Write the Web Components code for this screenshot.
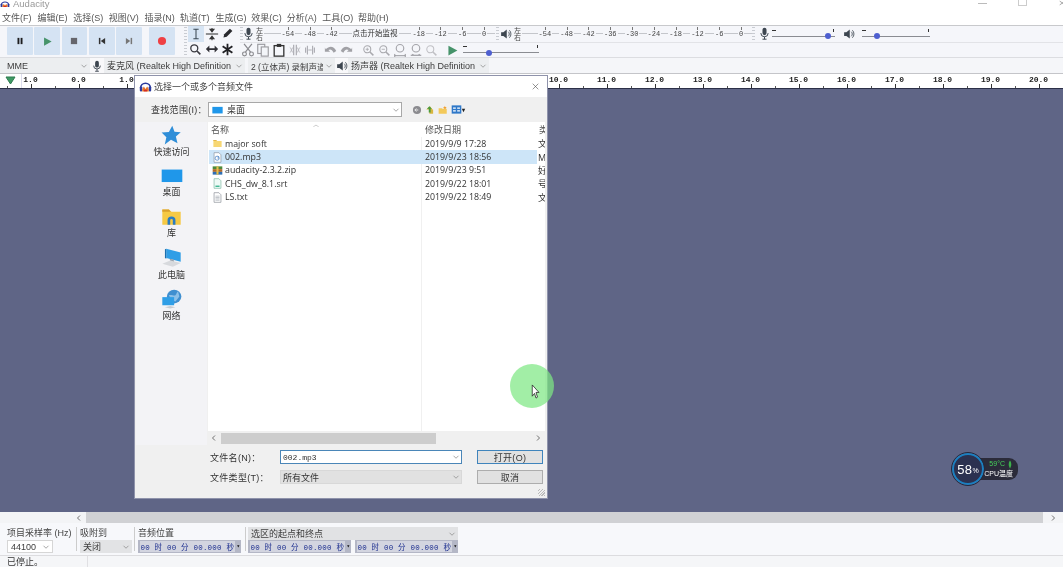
<!DOCTYPE html>
<html>
<head>
<meta charset="utf-8">
<title>Audacity</title>
<style>
  html, body { margin: 0; padding: 0; background: #5f6586; }
</style>
</head>
<body>
<au-app>
  <title-bar></title-bar>
  <menu-bar></menu-bar>
  <tool-dock></tool-dock>
  <device-bar></device-bar>
  <time-ruler></time-ruler>
  <track-canvas></track-canvas>
  <h-scroll></h-scroll>
  <selection-bar></selection-bar>
  <status-bar></status-bar>
  <open-dialog></open-dialog>
  <cursor-spot></cursor-spot>
  <temp-widget></temp-widget>
</au-app>

<script>
//all icons live here, on a 16 box unless they say otherwise
const ICONS = {
    logo: '<path d="M2 10a6 6 0 0 1 12 0" fill="none" stroke="#2b3a9e" stroke-width="2"/><rect x="1" y="8" width="3" height="6" rx="1" fill="#2b3a9e"/><rect x="12" y="8" width="3" height="6" rx="1" fill="#2b3a9e"/><path d="M4 11l2-3 2 3 2-3 2 3v3H4z" fill="#e8762c"/><path d="M6 12h4v2H6z" fill="#d42a2a"/>',
    pause: '<rect x="4" y="3" width="3" height="10" fill="#1d1d1f"/><rect x="9" y="3" width="3" height="10" fill="#1d1d1f"/>',
    play: '<path d="M3 2l11 6-11 6z" fill="#46936a"/>',
    stop: '<rect x="3" y="3" width="10" height="10" fill="#66666c"/>',
    prev: '<rect x="3" y="3" width="2.4" height="10" fill="#333"/><path d="M13 3v10L6 8z" fill="#333"/>',
    next: '<rect x="10.6" y="3" width="2.4" height="10" fill="#777"/><path d="M3 3v10l7-5z" fill="#777"/>',
    record: '<circle cx="8" cy="8" r="6.500" fill="#ef4044"/>',
    ibeam: '<path d="M5 2.500h6M5 13.500h6M8 2.500v11" fill="none" stroke="#3d4a55" stroke-width="1.200"/>',
    envelope: '<path d="M1 8h14" stroke="#333" stroke-width="1.200"/><path d="M8 1v4M8 15v-4" stroke="#333" stroke-width="1.200"/><path d="M4.500 2h7L8 6.500zM4.500 14h7L8 9.500z" fill="#333"/>',
    pencil: '<path d="M3 13l1-4 7-7 3 3-7 7z" fill="#2a2a2e"/>',
    zoom: '<circle cx="6.500" cy="6.500" r="4.300" fill="none" stroke="#3a3a40" stroke-width="1.600"/><path d="M9.800 9.800L14 14" stroke="#3a3a40" stroke-width="2"/>',
    shift: '<path d="M1 8l4-4v3h6V4l4 4-4 4V9H5v3z" fill="#303036"/>',
    multi: '<path d="M8 1v14M2 4l12 8M14 4L2 12" stroke="#202024" stroke-width="2.200"/>',
    mic: '<rect x="5.500" y="1" width="5" height="9" rx="2.500" fill="#3d4650"/><path d="M3.500 7.500a4.500 4.500 0 0 0 9 0M8 12v3M5.500 15h5" fill="none" stroke="#3d4650" stroke-width="1.200"/>',
    speaker: '<path d="M1.500 5.500h3L9 2v12l-4.500-3.500h-3z" fill="#3d4650"/><path d="M11 5a4 4 0 0 1 0 6M12.500 3a7 7 0 0 1 0 10" fill="none" stroke="#3d4650" stroke-width="1.100"/>',
    cut: '<circle cx="4" cy="12.500" r="2.200" fill="none" stroke="#8b8b90" stroke-width="1.300"/><circle cx="12" cy="12.500" r="2.200" fill="none" stroke="#8b8b90" stroke-width="1.300"/><path d="M5 10.500L12.500 1M11 10.500L3.500 1" stroke="#8b8b90" stroke-width="1.400"/>',
    copy: '<rect x="2" y="1.500" width="8" height="10.500" fill="#f3f5f9" stroke="#9a9a9f" stroke-width="1.300"/><rect x="6" y="4.500" width="8" height="10.500" fill="#f3f5f9" stroke="#9a9a9f" stroke-width="1.300"/>',
    paste: '<rect x="2.500" y="3" width="11" height="12" fill="none" stroke="#333" stroke-width="1.500"/><rect x="5.500" y="1" width="5" height="3.500" fill="#333"/>',
    trim: '<path d="M6.500 2v12M9.500 2v12" stroke="#a8a8ae" stroke-width="1.300"/><path d="M2 5c2 0 2 6 4 6M14 5c-2 0-2 6-4 6M2 11c2 0 2-6 4-6M14 11c-2 0-2-6-4-6" fill="none" stroke="#b6b6bb"/>',
    silence: '<path d="M3 5v6M5 3v10M11 3v10M13 5v6" stroke="#a8a8ae" stroke-width="1.200"/><path d="M6 8h4" stroke="#a8a8ae"/>',
    undo: '<path d="M2 7c4-4 9-4 12 2l-3 2c-2-4-4-4-6-3l2 2H1V5z" fill="#a1a1a6"/>',
    redo: '<path d="M14 7C10 3 5 3 2 9l3 2c2-4 4-4 6-3L9 10h6V5z" fill="#a1a1a6"/>',
    zin: '<circle cx="6.500" cy="6.500" r="4.300" fill="none" stroke="#a9a9ae" stroke-width="1.300"/><path d="M9.800 9.800L14 14" stroke="#a9a9ae" stroke-width="1.800"/><path d="M4.500 6.500h4M6.500 4.500v4" stroke="#a9a9ae"/>',
    zout: '<circle cx="6.500" cy="6.500" r="4.300" fill="none" stroke="#a9a9ae" stroke-width="1.300"/><path d="M9.800 9.800L14 14" stroke="#a9a9ae" stroke-width="1.800"/><path d="M4.500 6.500h4" stroke="#a9a9ae"/>',
    zsel: '<circle cx="8" cy="6" r="4.300" fill="none" stroke="#a4a4aa" stroke-width="1.300"/><path d="M2 14.500h12M2 12.500v4M14 12.500v4" stroke="#8a8a90"/>',
    zfit: '<circle cx="8" cy="6" r="4.300" fill="none" stroke="#a4a4aa" stroke-width="1.300"/><path d="M2 14h3l-1-1.500M14 14h-3l1-1.500M5 14h6" stroke="#7f7f86" fill="none"/>',
    ztog: '<circle cx="6.500" cy="6.500" r="4.300" fill="none" stroke="#c0c0c5" stroke-width="1.300"/><path d="M9.800 9.800L14 14" stroke="#c0c0c5" stroke-width="1.800"/>',
    chev: '<path d="M4 6l4 4 4-4" fill="none" stroke="#8a8a8a" stroke-width="1.200"/>',
    left: '<path d="M10 3L5 8l5 5" fill="none" stroke="#444" stroke-width="1.500"/>',
    right: '<path d="M6 3l5 5-5 5" fill="none" stroke="#444" stroke-width="1.500"/>',
    close: '<path d="M3 3l10 10M13 3L3 13" stroke="#444" stroke-width="1"/>',
    desktop: '<rect x="0.500" y="3" width="15" height="10.500" fill="#1f97ea"/>',
    star: '<path d="M9 .5l1.800 4.800 5 .4-3.900 3.400 1.300 5.400L8 11.800 3 15.500l1.300-5.800L.5 5.900l5.800-.4z" fill="#2f8ed8"/>',
    library: '<path d="M1 2h5l2 2h7v11H1z" fill="#f6c944"/><path d="M1 2h5l1.500 2H1z" fill="#d9a02e"/><path d="M5 15v-4a3 3 0 0 1 6 0v4h-2v-4a1 1 0 0 0-2 0v4z" fill="#2a7cc2"/>',
    pc: '<path d="M4 .5l11 3v7.500L4 8z" fill="#2f9ee6"/><path d="M4 .5L3 1v7l1 .5z" fill="#1c6fae"/><path d="M1 12.500l6-2.500 8 2-6 3z" fill="#d7d9dd"/><path d="M7 10l-.5-1.500 3 .7.500 1.500z" fill="#9aa3ad"/>',
    net: '<circle cx="10" cy="6" r="5.500" fill="#3f8fd0"/><path d="M6 5c2-1 4 1 5 0s1-3 2-3l1 4-3 4-3-1z" fill="#8cc0e8"/><rect x="1" y="6.500" width="9" height="6.500" fill="#2f9ee6"/><path d="M3 14.500l4-1 4 1-4 1z" fill="#c6ccd2"/>',
    folder: '<path d="M2 3h4l1.500 1.500H14V13H2z" fill="#f7d774"/><path d="M2 3h4l1 1.500H2z" fill="#e3b64b"/>',
    audio: '<path d="M3 1h7l3 3v11H3z" fill="#fff" stroke="#8a94a2"/><circle cx="7.500" cy="9" r="3" fill="none" stroke="#3a78c0"/><path d="M9 6v4" stroke="#3a78c0"/>',
    zip: '<rect x="1" y="2" width="14" height="4" fill="#4e8a3a"/><rect x="1" y="6" width="14" height="4" fill="#b16a2b"/><rect x="1" y="10" width="14" height="4" fill="#2f6fb5"/><rect x="6.500" y="2" width="3" height="12" fill="#e5c04a"/>',
    srt: '<path d="M3 1h7l3 3v11H3z" fill="#eefaf6" stroke="#7fb9a4"/><path d="M5 11h6v2H5z" fill="#39b58e"/>',
    txt: '<path d="M3 1h7l3 3v11H3z" fill="#fff" stroke="#8a8f98"/><path d="M5 6h6M5 8h6M5 10h6M5 12h6" stroke="#a8adb5"/>',
    back: '<circle cx="8" cy="8" r="6.500" fill="#8b8b8f"/><path d="M10 8H5M7 5.500L4.500 8 7 10.500" fill="none" stroke="#eee" stroke-width="1.500"/>',
    up: '<path d="M2 7h5v7h6V7l-1 0L8 2z" fill="#d8b63f"/><path d="M7 2l4 4H9v6H6V6H3z" fill="#4b9a3e"/>',
    newdir: '<path d="M1 5h5l1 1h7v8H1z" fill="#f3c95a"/><path d="M11 1l.8 2 2.200.2-1.700 1.400.5 2.100L11 5.600 9.200 6.700l.5-2.100L8 3.200l2.200-.2z" fill="#f0a032"/>',
    view: '<rect x="1" y="2" width="14" height="12" fill="#2f78c8"/><path d="M3 5h4v2H3zM9 5h4v2H9zM3 9h4v2H3zM9 9h4v2H9z" fill="#fff"/>',
    arrow: '<path d="M3 1v12l3-3 2 5 2-1-2-5h4z" fill="#fff" stroke="#222" stroke-width=".9"/>',
    leaf: '<path d="M8 1c4 3 5 9 0 14C3 10 4 4 8 1z" fill="#3cb04a"/>'
};

const tpl = html => {
    const t = document.createElement('template');
    t.innerHTML = html;
    return t;
};

class Shadowed extends HTMLElement {
    constructor(template) {
        super();
        this.attachShadow({ mode: 'open' });
        if (template) this.shadowRoot.appendChild(template.content.cloneNode(true));
    }
}

class AuIcon extends Shadowed {
    connectedCallback() {
        const s = this.getAttribute('size') || 14;
        const w = this.getAttribute('w') || s;
        const h = this.getAttribute('h') || s;
        this.shadowRoot.innerHTML = `<style>:host{display:inline-flex;flex:none}svg{display:block}</style>
            <svg width="${w}" height="${h}" viewBox="0 0 16 16" preserveAspectRatio="none">${ICONS[this.getAttribute('name')]}</svg>`;
    }
}

//the reference is a soft video frame, the small blur brings the picture near it
const appTpl = tpl(`<style>
    :host{display:flex;flex-direction:column;position:relative;width:1063px;height:567px;overflow:hidden;filter:blur(.35px);
      background:#fff;color:#333;font:9px "Liberation Sans","Noto Sans CJK SC",sans-serif}
</style><slot></slot>`);
class AuApp extends Shadowed { constructor() { super(appTpl); } }

const titleTpl = tpl(`<style>
    :host{display:flex;height:12px;flex:none;overflow:hidden;background:#fff;color:#9a9a9a;font-size:9.500px;line-height:7px}
    span{margin-left:3px}
    .ctl{margin-left:auto;display:flex;gap:31px;margin-right:-4px;color:#aaa}
    .ctl i{display:block;width:9px;height:6px;box-sizing:border-box}
    .min{border-top:1px solid #bbb;margin-top:3px}
    .max{border:1px solid #ccc;border-top:0}
</style>
<au-icon name="logo" w="10" h="8"></au-icon><span>Audacity</span>
<div class="ctl"><i class="min"></i><i class="max"></i><au-icon name="close" w="9" h="6"></au-icon></div>`);
class TitleBar extends Shadowed { constructor() { super(titleTpl); } }

const menuTpl = tpl(`<style>
    :host{display:flex;height:13px;flex:none;background:#fff;color:#555;font-size:9px;line-height:13px;padding-left:2px}
    span{width:35.600px;white-space:nowrap;flex:none}
</style>
<span>文件(F)</span><span>编辑(E)</span><span>选择(S)</span><span>视图(V)</span><span>插录(N)</span><span>轨道(T)</span><span>生成(G)</span><span>效果(C)</span><span>分析(A)</span><span>工具(O)</span><span>帮助(H)</span>`);
class MenuBar extends Shadowed { constructor() { super(menuTpl); } }

const gripCss = `background:repeating-linear-gradient(#c9ccd2 0 1px,transparent 1px 3px);`;

const dockTpl = tpl(`<style>
    :host{display:flex;height:32px;flex:none;background:#f5f6fa;border-top:1px solid #c8c9cc;box-sizing:border-box}
    .grip{width:3px;margin:1px 0;${gripCss}flex:none}
    .transport{display:flex;gap:1.500px;padding:1px 0 0 7px;width:184px;box-sizing:border-box;flex:none}
    .gap{width:4.500px;flex:none}
    .tools{display:grid;grid-template-columns:repeat(3,15.700px);grid-template-rows:repeat(2,15.500px);padding-left:1px;width:53px;flex:none;box-sizing:border-box}
    .tools div{display:flex;align-items:center;justify-content:center}
    .tools .on{background:#d6e4f3}
    .stack{display:flex;flex-direction:column;flex:1;min-width:0}
    .row{display:flex;align-items:center;height:15.500px;flex:none}
    .row + .row{border-top:1px solid #e2e3e7}
    .cell{width:15.600px;display:flex;justify-content:center;flex:none}
    .lr{font-size:7px;line-height:7px;width:9px;color:#444;flex:none;text-align:center}
    .mic{width:13px;display:flex;justify-content:center;flex:none}
</style>
<div class="transport">
  <transport-btn icon="pause"></transport-btn><transport-btn icon="play"></transport-btn><transport-btn icon="stop"></transport-btn>
  <transport-btn icon="prev"></transport-btn><transport-btn icon="next"></transport-btn>
  <div class="gap"></div><transport-btn icon="record"></transport-btn>
</div>
<div class="grip"></div>
<div class="tools">
  <div class="on"><au-icon name="ibeam"></au-icon></div><div><au-icon name="envelope"></au-icon></div><div><au-icon name="pencil" size="13"></au-icon></div>
  <div><au-icon name="zoom" size="13"></au-icon></div><div><au-icon name="shift"></au-icon></div><div><au-icon name="multi" size="13"></au-icon></div>
</div>
<div class="stack">
  <div class="row">
    <div class="grip" style="height:14px"></div>
    <div class="mic" style="margin-left:-1px"><au-icon name="mic" size="13"></au-icon></div>
    <div class="lr">左<br>右</div>
    <level-meter pad="13" msg></level-meter>
    <div class="grip" style="height:14px;margin-left:1px"></div>
    <div class="mic" style="margin-left:1px"><au-icon name="speaker" size="12"></au-icon></div>
    <div class="lr">左<br>右</div>
    <level-meter pad="12"></level-meter>
    <div class="grip" style="height:14px"></div>
    <div class="mic" style="margin-left:2px;width:15px"><au-icon name="mic" size="13"></au-icon></div>
    <mini-slider len="63" at="56"></mini-slider>
    <div class="mic" style="margin-left:6px;width:16px"><au-icon name="speaker" size="12"></au-icon></div>
    <mini-slider len="68" at="15" style="margin-left:5px"></mini-slider>
  </div>
  <div class="row">
    <div class="cell"><au-icon name="cut"></au-icon></div><div class="cell"><au-icon name="copy"></au-icon></div><div class="cell"><au-icon name="paste"></au-icon></div><div class="cell"><au-icon name="trim"></au-icon></div><div class="cell"><au-icon name="silence"></au-icon></div>
    <div class="cell" style="margin-left:5px"><au-icon name="undo"></au-icon></div><div class="cell"><au-icon name="redo"></au-icon></div>
    <div class="cell" style="margin-left:7px"><au-icon name="zin" size="13"></au-icon></div><div class="cell"><au-icon name="zout" size="13"></au-icon></div><div class="cell"><au-icon name="zsel"></au-icon></div><div class="cell"><au-icon name="zfit"></au-icon></div><div class="cell"><au-icon name="ztog" size="13"></au-icon></div>
    <div class="cell" style="margin-left:6px"><au-icon name="play" size="13"></au-icon></div>
    <mini-slider len="76" at="26" style="margin-left:2px"></mini-slider>
  </div>
</div>`);
class ToolDock extends Shadowed { constructor() { super(dockTpl); } }

const btnTpl = tpl(`<style>
    :host{display:flex;align-items:center;justify-content:center;width:25.800px;height:28px;background:#d5e3f3;border-radius:1px;flex:none}
</style><slot></slot>`);
class TransportBtn extends Shadowed {
    constructor() { super(btnTpl); }
    connectedCallback() {
        const icon = document.createElement('au-icon');
        icon.setAttribute('name', this.getAttribute('icon'));
        icon.setAttribute('size', this.getAttribute('icon') === 'play' ? 11 : 10);
        this.appendChild(icon);
    }
}

const meterTpl = tpl(`<style>
    :host{display:block;flex:none;position:relative;height:14px;overflow:hidden;color:#444;font:7px "Liberation Mono","Noto Sans CJK SC",monospace}
    .g{display:grid;grid-template-columns:repeat(10,21.800px);height:14px;align-items:center;background:linear-gradient(#c4c6cb,#c4c6cb) 0 50%/100% 1px no-repeat}
    span{justify-self:center;background:#f5f6fa;padding:0 1px;line-height:8px;white-space:nowrap;position:relative}
    span::before{content:"";position:absolute;left:50%;top:-3px;width:1px;height:3px;background:#777}
    .m{grid-column:span 3;font:7.500px/10px "Liberation Sans","Noto Sans CJK SC",sans-serif;color:#333}
    .m::before{display:none}
</style><div class="g"></div>`);
class LevelMeter extends Shadowed {
    constructor() { super(meterTpl); }
    connectedCallback() {
        const g = this.shadowRoot.querySelector('.g');
        g.style.paddingLeft = this.getAttribute('pad') + 'px';
        const msg = this.hasAttribute('msg');
        const labels = msg
            ? ['-54', '-48', '-42', '点击开始监视', '-18', '-12', '-6', '0']
            : ['-54', '-48', '-42', '-36', '-30', '-24', '-18', '-12', '-6', '0'];
        for (const l of labels) {
            const s = document.createElement('span');
            s.textContent = l;
            if (l.length > 3) s.className = 'm';
            g.appendChild(s);
        }
    }
}

const sliderTpl = tpl(`<style>
    :host{display:block;position:relative;height:12px;flex:none;background:linear-gradient(#8a8c92,#8a8c92) 0 8px/100% 1px no-repeat}
    i{position:absolute;top:5.500px;width:6px;height:6px;border-radius:50%;background:#4e5fd0;margin-left:-3px}
    b{position:absolute;top:1px;height:3px;width:1px;background:#333}
    .a{left:0;width:4px;height:1px;top:2px}.b{right:1px}
</style><i></i><b class="a"></b><b class="b"></b>`);
class MiniSlider extends Shadowed {
    constructor() { super(sliderTpl); }
    connectedCallback() {
        this.style.width = this.getAttribute('len') + 'px';
        this.shadowRoot.querySelector('i').style.left = this.getAttribute('at') + 'px';
    }
}

const comboTpl = tpl(`<style>
    :host{display:flex;align-items:center;box-sizing:border-box;height:100%;padding-left:3px;flex:none;overflow:hidden;white-space:nowrap;background:#eceef0;color:#3c3c3c}
    span{flex:1;overflow:hidden}
    au-icon{margin:0 1px}
</style><span><slot></slot></span><au-icon name="chev" size="10"></au-icon>`);
class AuCombo extends Shadowed { constructor() { super(comboTpl); } }

const deviceTpl = tpl(`<style>
    :host{display:flex;height:16px;flex:none;background:#f5f6f9;border-top:1px solid #dcdde1;box-sizing:border-box;font-size:9px}
    .ic{width:14px;display:flex;justify-content:center;align-items:center;background:#f8f8fa;flex:none}
    au-combo + au-combo{margin-left:3px}
</style>
<au-combo style="width:90px;padding-left:7px">MME</au-combo>
<div class="ic"><au-icon name="mic" size="12"></au-icon></div>
<au-combo style="width:141px">麦克风 (Realtek High Definition</au-combo>
<au-combo style="width:87px;font-size:8.500px">2 (立体声) 录制声道</au-combo>
<div class="ic" style="width:13px"><au-icon name="speaker" size="12"></au-icon></div>
<au-combo style="width:141px">扬声器 (Realtek High Definition</au-combo>`);
class DeviceBar extends Shadowed { constructor() { super(deviceTpl); } }

const rulerTpl = tpl(`<style>
    :host{display:flex;height:15px;flex:none;background:#fff;border-top:1px solid #c4c5c9;box-sizing:border-box;overflow:hidden}
    .play{width:21.500px;flex:none;display:flex;justify-content:center;padding-top:2px;box-sizing:border-box;border-right:1px solid #dde}
    .play svg{display:block}
    .t{display:flex;margin-left:-15px}
    .c{width:48px;flex:none;position:relative;text-align:center;color:#222;font:bold 8px/10px "Liberation Mono",monospace;padding-top:1px;box-sizing:border-box;height:14px}
    .c::before{content:"";position:absolute;left:50%;bottom:0;width:1px;height:4px;background:#333}
    .c::after{content:"";position:absolute;left:0;bottom:0;width:1px;height:2px;background:#555}
</style>
<div class="play"><svg width="11" height="9" viewBox="0 0 11 9"><path d="M1 1h9L5.500 8z" fill="#3f9a64" stroke="#2d7a4e"/></svg></div>
<div class="t"></div>`);
class TimeRuler extends Shadowed {
    constructor() { super(rulerTpl); }
    connectedCallback() {
        const t = this.shadowRoot.querySelector('.t');
        for (let i = -1; i <= 20; i++) {
            const c = document.createElement('div');
            c.className = 'c';
            c.textContent = Math.abs(i).toFixed(1);
            t.appendChild(c);
        }
    }
}

const canvasTpl = tpl(`<style>
    :host{display:block;flex:1;min-height:0;background:#5f6586;border-top:1.500px solid #2c3048}
</style>`);
class TrackCanvas extends Shadowed { constructor() { super(canvasTpl); } }

const hscrollTpl = tpl(`<style>
    :host{display:flex;align-items:center;height:11px;flex:none;background:#f3f4f6}
    .l{width:86px;display:flex;justify-content:flex-end;padding-right:3px;box-sizing:border-box;flex:none}
    .th{flex:1;align-self:stretch;background:#d0d1d4}
    .r{width:20px;display:flex;justify-content:center;flex:none}
</style>
<div class="l"><au-icon name="left" size="8"></au-icon></div><div class="th"></div><div class="r"><au-icon name="right" size="8"></au-icon></div>`);
class HScroll extends Shadowed { constructor() { super(hscrollTpl); } }

const selTpl = tpl(`<style>
    :host{display:grid;height:32px;flex:none;box-sizing:border-box;padding:4px 0 0 7px;font-size:9px;color:#444;
      background:linear-gradient(#ccc,#ccc) 76px 4px/1px 24px no-repeat,linear-gradient(#ccc,#ccc) 134px 4px/1px 24px no-repeat,linear-gradient(#ccc,#ccc) 245px 4px/1px 24px no-repeat,#f7f8fb;
      grid-template-columns:73px 58px 110px 212px;grid-template-rows:13px 13px;align-content:start}
    .lb{line-height:13px;white-space:nowrap}
    .v{display:flex}
    au-combo{font-size:9px}
    .w{background:#fff;border:1px solid #d6d6d6;width:46px}
    .g{background:#e2e3e5;width:52px}
    time-box + time-box{margin-left:4px}
</style>
<div class="lb">项目采样率 (Hz)</div><div class="lb">吸附到</div><div class="lb">音频位置</div>
<div class="v"><au-combo style="width:210px;background:#e1e2e4">选区的起点和终点</au-combo></div>
<div class="v"><au-combo class="w">44100</au-combo></div>
<div class="v"><au-combo class="g">关闭</au-combo></div>
<div class="v"><time-box></time-box></div>
<div class="v"><time-box></time-box><time-box></time-box></div>`);
class SelectionBar extends Shadowed { constructor() { super(selTpl); } }

const timeTpl = tpl(`<style>
    :host{display:flex;align-items:center;justify-content:space-between;width:103px;height:13px;flex:none;box-sizing:border-box;padding:0 1px 0 2px;
      background:#b4b7c6;color:#1d2f8f;font:7.500px "Liberation Mono","Noto Sans CJK SC",monospace;white-space:nowrap;overflow:hidden}
    span{background:#d3d5e0;padding:0 .5px;letter-spacing:.2px}
    b{font-size:6px;color:#111;line-height:1}
</style><span>00 时 00 分 00.000 秒</span><b>▾</b>`);
class TimeBox extends Shadowed { constructor() { super(timeTpl); } }

const statusTpl = tpl(`<style>
    :host{display:flex;height:12px;flex:none;background:#f5f6f8;border-top:1px solid #dcdcdf;box-sizing:border-box;color:#333;font-size:9px;line-height:13px;overflow:hidden}
    div{width:88px;padding-left:7px;box-sizing:border-box;border-right:1px solid #e0e0e3}
</style><div>已停止。</div>`);
class StatusBar extends Shadowed { constructor() { super(statusTpl); } }

const dialogTpl = tpl(`<style>
    :host{position:absolute;left:134px;top:75px;width:414px;height:424px;box-sizing:border-box;display:flex;flex-direction:column;
      background:#f0f0f0;border:1px solid #8f93ab;color:#333;font-size:9px}
    .ttl{display:flex;align-items:center;height:21px;flex:none;background:#fff;padding-left:4px;gap:2px;color:#444}
    .ttl au-icon:last-child{margin-left:auto;margin-right:7px}
    .loc{display:flex;align-items:center;height:25px;flex:none;padding-left:16px}
    .loc label{width:57px;letter-spacing:.3px;white-space:nowrap}
    .path{display:flex;align-items:center;gap:4px;width:194px;height:15px;box-sizing:border-box;background:#fff;border:1px solid #a8a8a8;padding-left:3px}
    .path span{flex:1}
    .nav{display:flex;gap:3px;margin-left:10px;align-items:center}
    .nav b{font-size:6px;margin-left:-3px;color:#222}
    .main{display:flex;flex:1;min-height:0}
    .side{width:71px;flex:none;margin-left:1px;background:#f3f3f6;display:flex;flex-direction:column;align-items:center;padding-top:1px;box-sizing:border-box}
    .it{height:41px;display:flex;flex-direction:column;align-items:center;justify-content:flex-start;gap:2px;padding-top:1px;box-sizing:border-box;line-height:11px}
    .it au-icon{margin-top:1px}
    .list{flex:1;margin:0 2px 0 1px;background:#fff;display:flex;flex-direction:column;min-width:0;position:relative}
    .head{display:flex;height:15px;flex:none;align-items:center;padding-left:3px;color:#555;position:relative;white-space:nowrap;overflow:hidden}
    .head .sort{position:absolute;left:105px;top:0;width:6px;height:3px;color:#999;font-size:6px;line-height:4px}
    .n{width:214px;flex:none}
    .rows{flex:1;min-height:0;background:linear-gradient(#f0f0f0,#f0f0f0) 213px 0/1px 100% no-repeat}
    .bar{display:flex;height:14px;flex:none;align-items:center;background:#f0f0f0}
    .bar .th{width:215px;align-self:stretch;margin:2px 0 1px;background:#cdcdcd}
    .bar au-icon:first-child{margin:0 3px 0 2px}
    .bar au-icon:last-child{margin-left:auto;margin-right:3px}
    .foot{display:grid;grid-template-columns:72px 182px 81px;grid-template-rows:14px 14px;row-gap:6px;padding:5px 0 0 73px;height:53px;box-sizing:border-box;flex:none;position:relative;align-items:center;align-content:start}
    .foot label{letter-spacing:.3px;white-space:nowrap;padding-left:2px}
    .inp{display:flex;align-items:center;height:14px;box-sizing:border-box;background:#fff;border:1px solid #4a86b8;padding-left:2px;font:8px "Liberation Mono",monospace;color:#333}
    .inp span{flex:1}
    .sel{background:#e1e1e1;border:1px solid #d8d8d8;padding-left:0}
    .btn{margin-left:15px;display:flex;align-items:center;justify-content:center;height:14.500px;box-sizing:border-box;background:#e1e1e1;border:1px solid #adadad;letter-spacing:.3px}
    .btn.d{border:1px solid #3f84bc}
    .rz{position:absolute;right:2px;bottom:2px;width:7px;height:7px;background:repeating-linear-gradient(135deg,transparent 0 1px,#bbb 1px 2px)}
</style>
<div class="ttl"><au-icon name="logo" size="13"></au-icon><span>选择一个或多个音频文件</span><au-icon name="close" size="9"></au-icon></div>
<div class="loc"><label>查找范围(I)：</label>
  <div class="path"><au-icon name="desktop" w="11" h="10"></au-icon><span>桌面</span><au-icon name="chev" size="10"></au-icon></div>
  <div class="nav"><au-icon name="back" size="10"></au-icon><au-icon name="up" size="10"></au-icon><au-icon name="newdir" size="10"></au-icon><au-icon name="view" size="11"></au-icon><b>▾</b></div>
</div>
<div class="main">
  <div class="side">
    <div class="it"><au-icon name="star" size="20"></au-icon><span>快速访问</span></div>
    <div class="it"><au-icon name="desktop" w="22" h="19"></au-icon><span>桌面</span></div>
    <div class="it"><au-icon name="library" w="21" h="19"></au-icon><span>库</span></div>
    <div class="it"><au-icon name="pc" w="21" h="20"></au-icon><span>此电脑</span></div>
    <div class="it"><au-icon name="net" w="21" h="20"></au-icon><span>网络</span></div>
  </div>
  <div class="list">
    <div class="head"><span class="sort">︿</span><span class="n">名称</span><span>修改日期</span><span style="margin-left:78px">类</span></div>
    <div class="rows">
      <file-row icon="folder" name="major soft" date="2019/9/9 17:28" kind="文"></file-row>
      <file-row icon="audio" name="002.mp3" date="2019/9/23 18:56" kind="M" selected></file-row>
      <file-row icon="zip" name="audacity-2.3.2.zip" date="2019/9/23 9:51" kind="好"></file-row>
      <file-row icon="srt" name="CHS_dw_8.1.srt" date="2019/9/22 18:01" kind="号"></file-row>
      <file-row icon="txt" name="LS.txt" date="2019/9/22 18:49" kind="文"></file-row>
    </div>
    <div class="bar"><au-icon name="left" size="8"></au-icon><div class="th"></div><au-icon name="right" size="8"></au-icon></div>
  </div>
</div>
<div class="foot">
  <label>文件名(N)：</label><div class="inp"><span>002.mp3</span><au-icon name="chev" size="10"></au-icon></div><div class="btn d">打开(O)</div>
  <label>文件类型(T)：</label><div class="inp sel" style="font:9px 'Liberation Sans','Noto Sans CJK SC',sans-serif"><span style="padding-left:2px">所有文件</span><au-icon name="chev" size="10"></au-icon></div><div class="btn">取消</div>
  <div class="rz"></div>
</div>`);
class OpenDialog extends Shadowed { constructor() { super(dialogTpl); } }

const rowTpl = tpl(`<style>
    :host{display:flex;align-items:center;height:13.400px;font:8.800px "Open Sans","Noto Sans CJK SC",sans-serif;color:#333;white-space:nowrap;padding-left:4px;overflow:hidden}
    :host([selected]){background:linear-gradient(#cde5f8,#cde5f8) 1px 0/328px 100% no-repeat}
    au-icon{margin-right:2px}
    .n{width:200px;flex:none}
    .d{width:113px;flex:none}
    .k{font-size:9px}
</style><span class="n"></span><span class="d"></span><span class="k"></span>`);
class FileRow extends Shadowed {
    constructor() { super(rowTpl); }
    connectedCallback() {
        const r = this.shadowRoot;
        //icon built here: its name has to be there before it connects
        const icon = document.createElement('au-icon');
        icon.setAttribute('name', this.getAttribute('icon'));
        icon.setAttribute('size', 11);
        r.insertBefore(icon, r.querySelector('.n'));
        r.querySelector('.n').textContent = this.getAttribute('name');
        r.querySelector('.d').textContent = this.getAttribute('date');
        r.querySelector('.k').textContent = this.getAttribute('kind');
    }
}

const spotTpl = tpl(`<style>
    :host{position:absolute;left:510px;top:364px;width:44px;height:44px;border-radius:50%;background:rgba(126,232,132,.72)}
    au-icon{position:absolute;left:20px;top:20px}
</style><au-icon name="arrow" w="12" h="15"></au-icon>`);
class CursorSpot extends Shadowed { constructor() { super(spotTpl); } }

const tempTpl = tpl(`<style>
    :host{position:absolute;left:952px;top:453px;width:66px;height:32px;color:#fff}
    .pill{position:absolute;left:16px;top:5px;width:50px;height:22px;border-radius:9px;background:#2b2b3a;display:flex;flex-direction:column;align-items:flex-end;padding:1px 5px 0 0;box-sizing:border-box;font-size:7px;line-height:10px}
    .hot{color:#46d05a;display:flex;align-items:center;gap:2px}
    .ring{position:absolute;left:0;top:0;width:32px;height:32px;box-sizing:border-box;border-radius:50%;background:#2b3150;border:2px solid #1c7fc0;outline:1px solid #24293f;display:flex;align-items:center;justify-content:center;font:13px "Liberation Sans",sans-serif;letter-spacing:.5px}
    .ring small{font-size:7px;margin-top:3px;letter-spacing:0}
</style>
<div class="pill"><div class="hot">59°C<au-icon name="leaf" w="6" h="9"></au-icon></div><div>CPU温度</div></div>
<div class="ring">58<small>%</small></div>`);
class TempWidget extends Shadowed { constructor() { super(tempTpl); } }

customElements.define('au-icon', AuIcon);
customElements.define('au-app', AuApp);
customElements.define('title-bar', TitleBar);
customElements.define('menu-bar', MenuBar);
customElements.define('tool-dock', ToolDock);
customElements.define('transport-btn', TransportBtn);
customElements.define('level-meter', LevelMeter);
customElements.define('mini-slider', MiniSlider);
customElements.define('au-combo', AuCombo);
customElements.define('device-bar', DeviceBar);
customElements.define('time-ruler', TimeRuler);
customElements.define('track-canvas', TrackCanvas);
customElements.define('h-scroll', HScroll);
customElements.define('selection-bar', SelectionBar);
customElements.define('time-box', TimeBox);
customElements.define('status-bar', StatusBar);
customElements.define('open-dialog', OpenDialog);
customElements.define('file-row', FileRow);
customElements.define('cursor-spot', CursorSpot);
customElements.define('temp-widget', TempWidget);
</script>
</body>
</html>
